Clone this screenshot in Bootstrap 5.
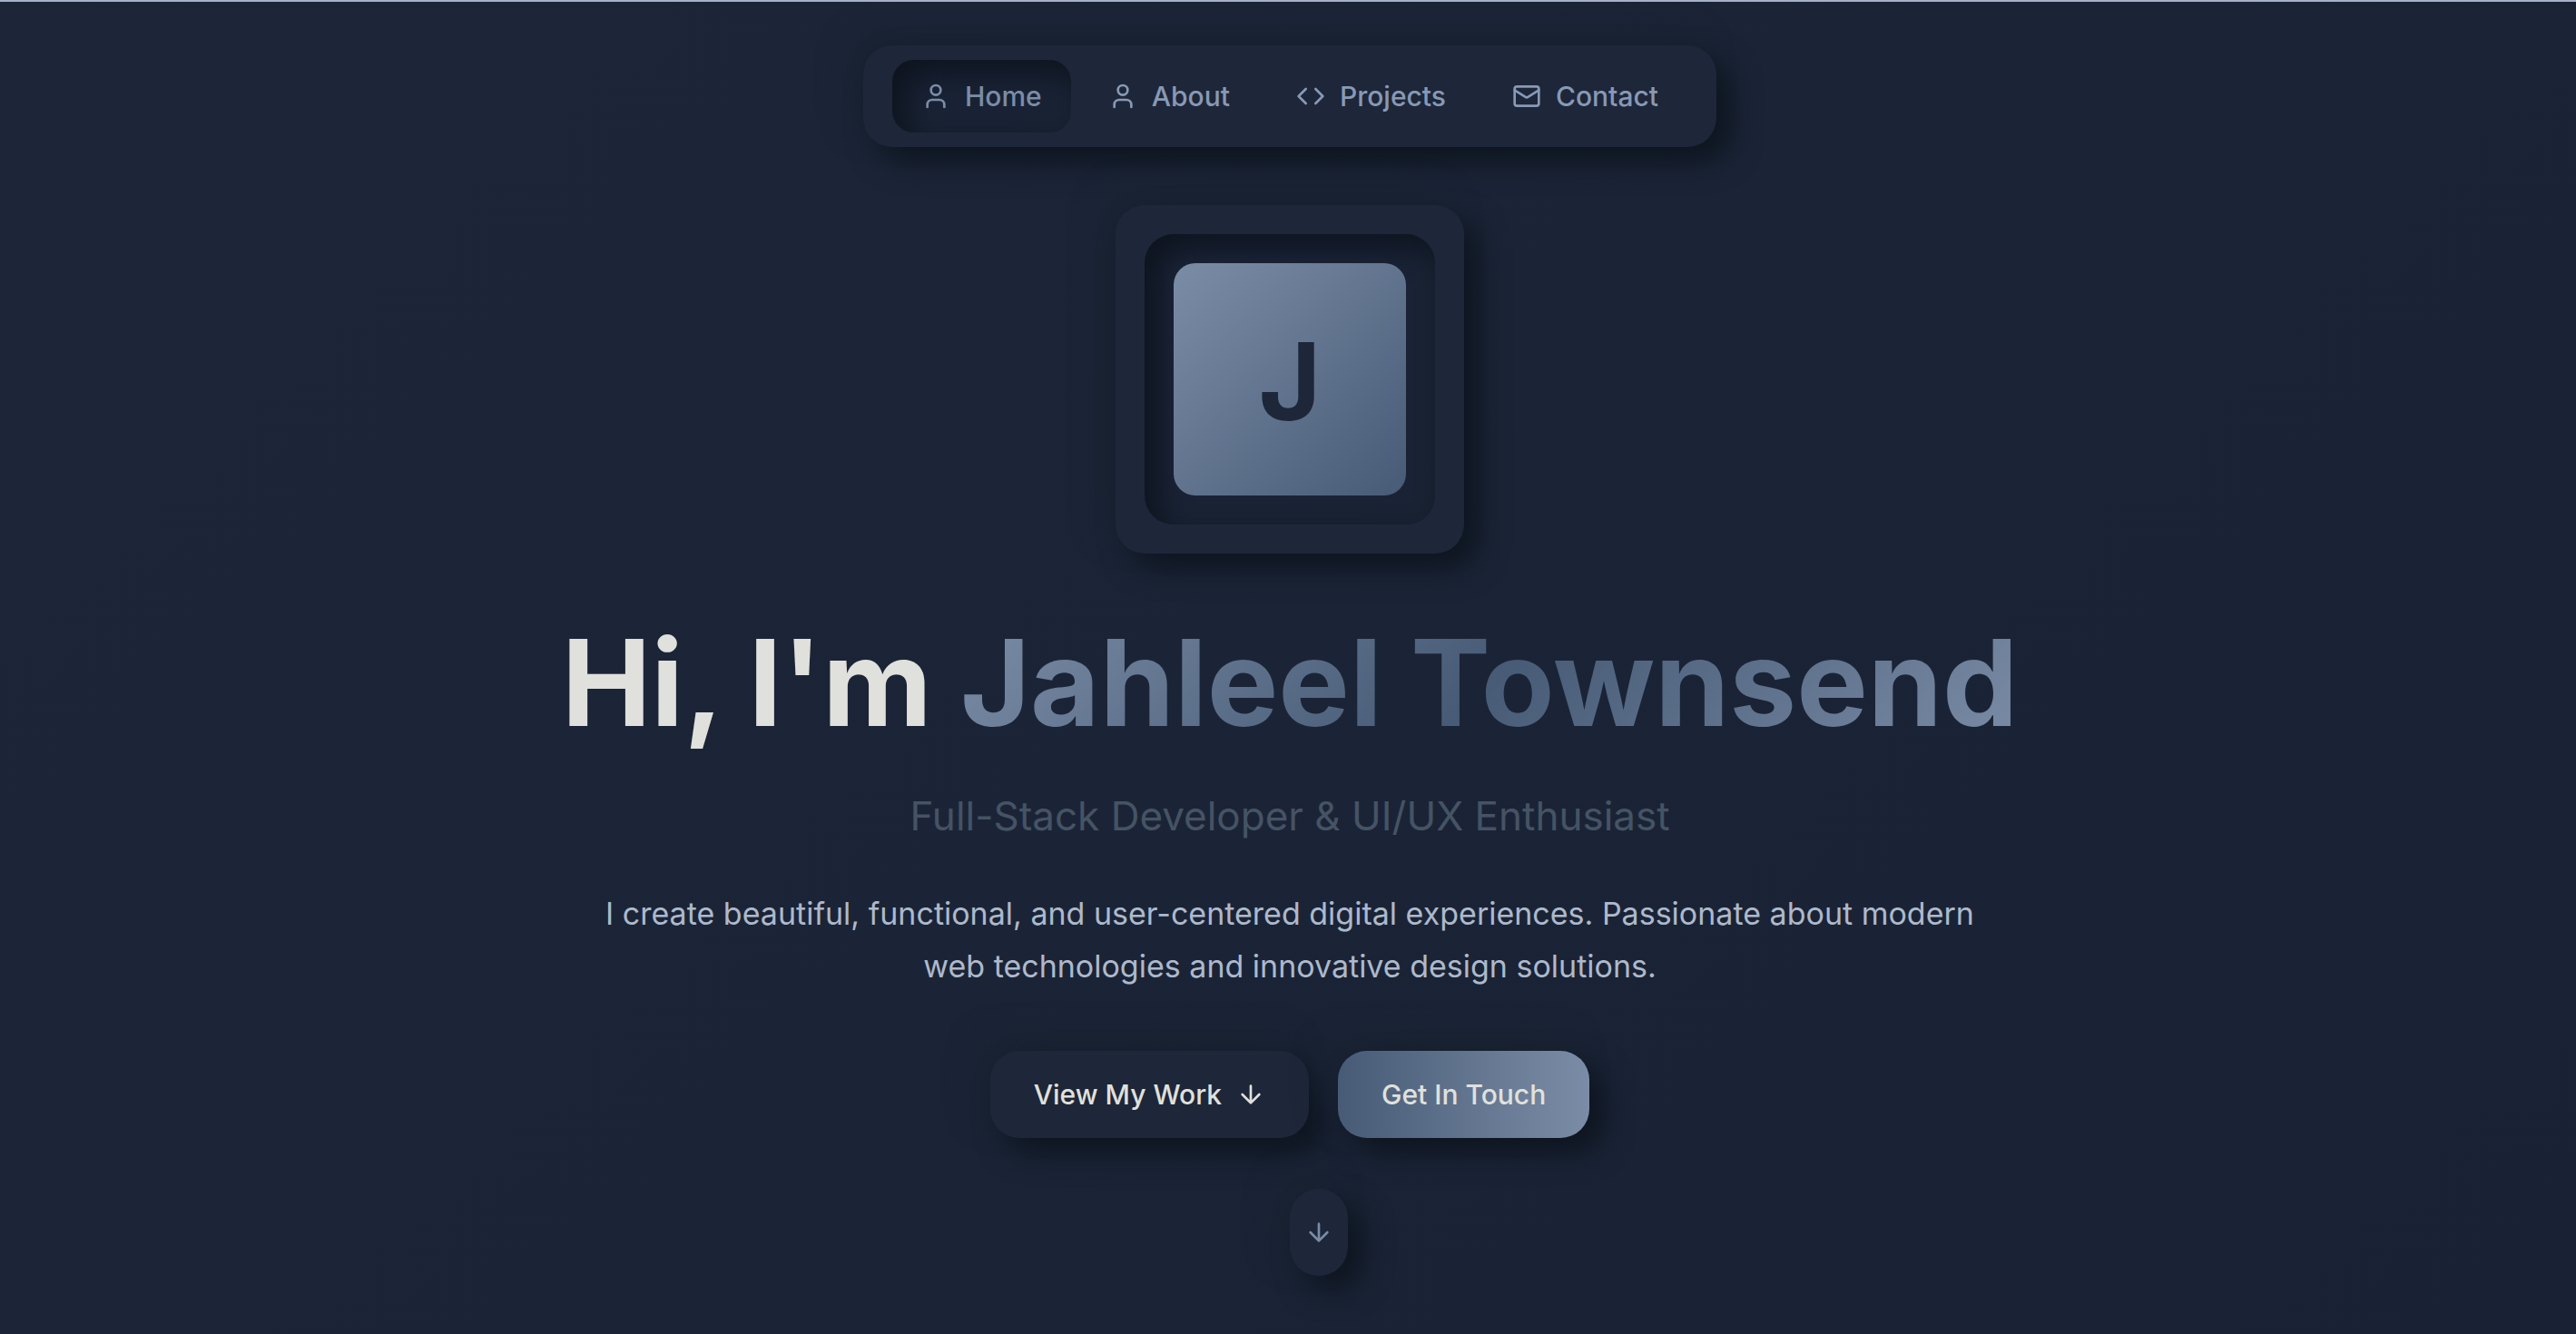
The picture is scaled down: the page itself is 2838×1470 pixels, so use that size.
<!DOCTYPE html>
<html lang="en">
<head>
<meta charset="utf-8">
<meta name="viewport" content="width=device-width, initial-scale=1">
<title>Jahleel Townsend</title>
<link href="https://cdn.jsdelivr.net/npm/bootstrap@5.3.0/dist/css/bootstrap.min.css" rel="stylesheet">
<style>
  :root {
    --surface: #1e2639;
    --ink: #e0e1dc;
    --steel: #7b8ca6;
    --deep: #475b76;
    --shade: #0e1520;
    --glow: #1a2333;
  }
  body {
    font-family: Inter, "Liberation Sans", sans-serif;
    font-size: 30px;
    color: #adb9cc;
    background: linear-gradient(135deg, #1d2639 0%, #1b2436 50%, #192234 100%);
    border-top: 2px solid #a5b1c8;
    min-height: 100vh;
  }
  .raised { background: var(--surface); box-shadow: 16px 16px 32px var(--shade), -16px -16px 32px var(--glow); }
  .sunken { background: #1b2437; box-shadow: inset 16px 16px 32px var(--shade), inset -16px -16px 32px var(--glow); }
  .round-lg { border-radius: 32px; }
  .round-md { border-radius: 24px; }
  .icon { width: 32px; height: 32px; flex: none; fill: none; stroke: currentColor; stroke-width: 2; stroke-linecap: round; stroke-linejoin: round; }
  .top-nav { padding: 16px 32px; margin-top: 48px; }
  .top-nav .nav { gap: 9px; }
  .top-nav .nav-link { color: #8799b5; gap: 16px; padding: 0 32px; height: 80px; font-weight: 500; }
  .top-nav .nav-link.active { color: var(--steel); }
  .frame { padding: 32px; }
  .monogram { width: 256px; height: 256px; padding-top: 4px; font-size: 118px; color: var(--surface); background: linear-gradient(135deg, var(--steel), var(--deep)); }
  h1 { font-size: 132px; line-height: 156px; color: var(--ink); }
  .name { color: transparent; background: linear-gradient(135deg, var(--steel), var(--deep), var(--steel)); -webkit-background-clip: text; background-clip: text; }
  .tagline { font-size: 44px; line-height: 70px; color: #455365; margin-top: 34px; }
  .intro { font-size: 34px; line-height: 58px; max-width: 1536px; margin-top: 44px; }
  .gap-wide { gap: 32px; }
  .cta { height: 96px; padding: 0 48px; gap: 16px; font-size: 30px; font-weight: 500; color: var(--ink); border: 0; --bs-btn-border-radius: 32px; }
  .cta-fill { background: linear-gradient(90deg, var(--deep), var(--steel)); box-shadow: 16px 16px 32px var(--shade), -16px -16px 32px var(--glow); }
  .scroll-cue { width: 64px; height: 96px; margin: 56px 0 0 64px; color: var(--steel); }
  .mt-block { margin-top: 64px; }
</style>
</head>
<body>
<div class="d-flex flex-column align-items-center ps-1">
  <header class="top-nav raised round-lg">
    <nav aria-label="Main">
      <ul class="nav flex-nowrap">
        <li class="nav-item"><a class="nav-link active sunken round-md d-flex align-items-center" aria-current="page" href="#home">
          <svg class="icon" viewBox="0 0 24 24" aria-hidden="true"><path d="M19 21v-2a4 4 0 0 0-4-4H9a4 4 0 0 0-4 4v2"/><circle cx="12" cy="7" r="4"/></svg>Home</a></li>
        <li class="nav-item"><a class="nav-link d-flex align-items-center" href="#about">
          <svg class="icon" viewBox="0 0 24 24" aria-hidden="true"><path d="M19 21v-2a4 4 0 0 0-4-4H9a4 4 0 0 0-4 4v2"/><circle cx="12" cy="7" r="4"/></svg>About</a></li>
        <li class="nav-item"><a class="nav-link d-flex align-items-center" href="#projects">
          <svg class="icon" viewBox="0 0 24 24" aria-hidden="true"><path d="m16 18 6-6-6-6M8 6l-6 6 6 6"/></svg>Projects</a></li>
        <li class="nav-item"><a class="nav-link d-flex align-items-center" href="#contact">
          <svg class="icon" viewBox="0 0 24 24" aria-hidden="true"><rect x="2" y="4" width="20" height="16" rx="2"/><path d="m22 7-8.970 5.700a1.940 1.940 0 0 1-2.060 0L2 7"/></svg>Contact</a></li>
      </ul>
    </nav>
  </header>

  <main id="home" class="d-flex flex-column align-items-center text-center">
    <div class="frame raised round-lg mt-block">
      <div class="frame sunken round-lg">
        <div class="monogram round-md d-flex align-items-center justify-content-center fw-bold lh-1">J</div>
      </div>
    </div>
    <h1 class="mt-block mb-0 fw-bold">Hi, I'm <span class="name">Jahleel Townsend</span></h1>
    <p class="tagline mb-0">Full-Stack Developer &amp; UI/UX Enthusiast</p>
    <p class="intro mb-0">I create beautiful, functional, and user-centered digital experiences. Passionate about modern web technologies and innovative design solutions.</p>
    <div class="d-flex gap-wide mt-block">
      <button type="button" class="btn cta raised d-flex align-items-center">View My Work
        <svg class="icon" viewBox="0 0 24 24" aria-hidden="true"><path d="M12 5v14M19 12l-7 7-7-7"/></svg></button>
      <button type="button" class="btn cta cta-fill">Get In Touch</button>
    </div>
    <a class="scroll-cue raised rounded-pill d-flex align-items-center justify-content-center" href="#about" aria-label="Scroll down">
      <svg class="icon" viewBox="0 0 24 24" aria-hidden="true"><path d="M12 5v14M19 12l-7 7-7-7"/></svg></a>
  </main>
</div>
<script src="https://cdn.jsdelivr.net/npm/bootstrap@5.3.0/dist/js/bootstrap.bundle.min.js"></script>
</body>
</html>
